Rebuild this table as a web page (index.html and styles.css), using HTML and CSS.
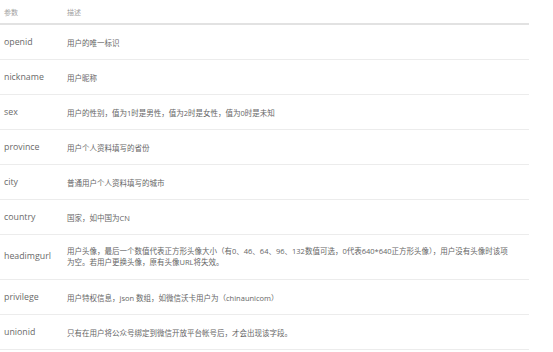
FILE: index.html
```html
<!DOCTYPE html>
<html lang="zh-CN">
<head>
<meta charset="utf-8">
<title>参数</title>
<link rel="stylesheet" href="styles.css">
</head>
<body>
<table class="params">
  <thead>
    <tr><th class="c1">参数</th><th class="c2">描述</th></tr>
  </thead>
  <tbody>
    <tr><td class="c1">openid</td><td class="c2">用户的唯一标识</td></tr>
    <tr><td class="c1">nickname</td><td class="c2">用户昵称</td></tr>
    <tr><td class="c1">sex</td><td class="c2">用户的性别，值为1时是男性，值为2时是女性，值为0时是未知</td></tr>
    <tr><td class="c1">province</td><td class="c2">用户个人资料填写的省份</td></tr>
    <tr><td class="c1">city</td><td class="c2">普通用户个人资料填写的城市</td></tr>
    <tr><td class="c1">country</td><td class="c2">国家，如中国为CN</td></tr>
    <tr class="tall"><td class="c1">headimgurl</td><td class="c2">用户头像，最后一个数值代表正方形头像大小（有0、46、64、96、132数值可选，0代表640*640正方形头像），用户没有头像时该项<br>为空。若用户更换头像，原有头像URL将失效。</td></tr>
    <tr><td class="c1">privilege</td><td class="c2">用户特权信息，json 数组，如微信沃卡用户为（chinaunicom）</td></tr>
    <tr><td class="c1">unionid</td><td class="c2">只有在用户将公众号绑定到微信开放平台帐号后，才会出现该字段。</td></tr>
  </tbody>
</table>
</body>
</html>
```

FILE: styles.css
```css
html, body {
  margin: 0;
  padding: 0;
  background: #ffffff;
}

.params {
  width: 529px;
  border-collapse: collapse;
  font-family: "Open Sans", "Noto Sans CJK SC", sans-serif;
  color: #666666;
  font-size: 7.5px;
}

.params th {
  height: 23px;
  padding: 0;
  text-align: left;
  font-weight: normal;
  color: #a0a0a0;
  font-size: 7px;
  border-bottom: 2px solid #e2e2e2;
  vertical-align: middle;
}

.params td {
  height: 34px;
  padding: 0;
  border-bottom: 1px solid #ececec;
  vertical-align: middle;
  white-space: nowrap;
}

.params .tall td {
  height: 44px;
  line-height: 11.5px;
}

.params .c1 {
  width: 63px;
  padding-left: 4px;
}

.params td.c1 {
  font-size: 8.8px;
  color: #6a6a6a;
}
```
